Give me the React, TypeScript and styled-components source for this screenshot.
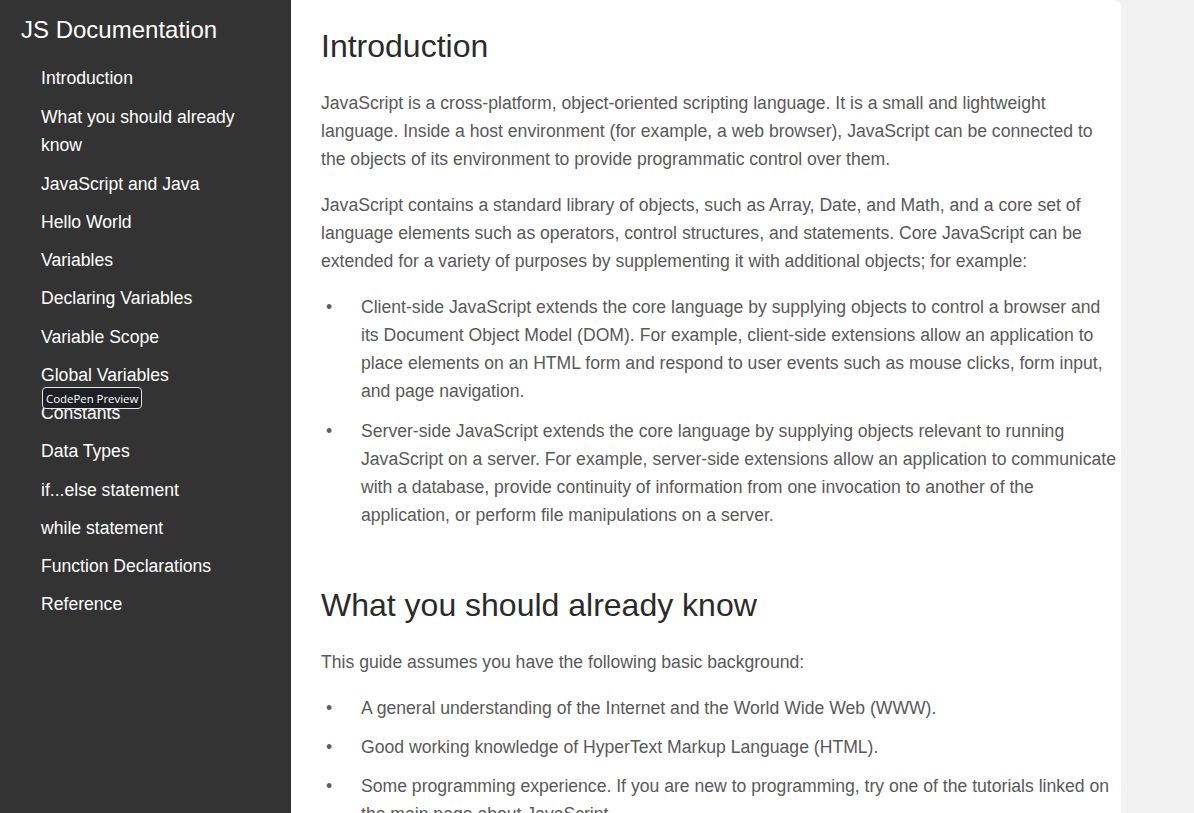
import React from "react";
import styled, { createGlobalStyle } from "styled-components";

const Global = createGlobalStyle`
  html, body { margin: 0; padding: 0; height: 100%; overflow: hidden; }
  body { background: #f2f2f2; font-family: "Liberation Sans", Arial, sans-serif; }
  #root { height: 100%; }
`;

const Page = styled.div`
  display: flex;
  height: 100vh;
  position: relative;
`;

const Sidebar = styled.nav`
  width: 291px;
  flex: none;
  background: #333333;
  color: #ffffff;
  padding: 16px 20px 0 21px;
  box-sizing: border-box;
`;

const SideTitle = styled.header`
  font-size: 24px;
  line-height: 28px;
  margin: 0 0 20px;
`;

const NavList = styled.ul`
  list-style: none;
  margin: 0;
  padding: 0 0 0 20px;
  display: flex;
  flex-direction: column;
  gap: 10.25px;
`;

const NavItem = styled.li<{ $first?: boolean }>`
  margin-bottom: ${(p) => (p.$first ? 1 : 0)}px;
`;

const NavLink = styled.a`
  display: block;
  color: #ffffff;
  text-decoration: none;
  font-size: 17.6px;
  line-height: 28px;
`;

const Main = styled.main`
  width: 830px;
  flex: none;
  background: #ffffff;
  border-radius: 0 8px 0 0;
  padding: 27px 0 0 30px;
  box-sizing: border-box;
  display: flex;
  flex-direction: column;
  gap: 39px;
`;

const Section = styled.section`
  display: flex;
  flex-direction: column;
`;

const Heading = styled.header`
  font-size: 32px;
  line-height: 38px;
  color: #2b2b2b;
  margin: 0 0 24px;
`;

const Para = styled.p`
  font-size: 17.6px;
  line-height: 28px;
  color: #595959;
  margin: 0 0 18px;
`;

const List = styled.ul<{ $gap?: number }>`
  list-style: none;
  margin: 0 0 18px;
  padding: 0;
  display: flex;
  flex-direction: column;
  gap: ${(p) => p.$gap ?? 12}px;
`;

const Item = styled.li`
  display: grid;
  grid-template-columns: 40px 1fr;
  font-size: 17.6px;
  line-height: 28px;
  color: #595959;
  &::before {
    content: "•";
    padding-left: 5px;
    color: #5f5f5f;
  }
`;

const Badge = styled.div`
  position: absolute;
  left: 42px;
  top: 387px;
  height: 22px;
  box-sizing: border-box;
  padding: 0 3px;
  display: flex;
  align-items: center;
  background: #1f1f26;
  color: #ffffff;
  border: 1px solid #e6e6e6;
  border-radius: 4px;
  font-family: "Open Sans", "Noto Sans", sans-serif;
  font-size: 11.4px;
`;

const nav = [
  "Introduction",
  "What you should already know",
  "JavaScript and Java",
  "Hello World",
  "Variables",
  "Declaring Variables",
  "Variable Scope",
  "Global Variables",
  "Constants",
  "Data Types",
  "if...else statement",
  "while statement",
  "Function Declarations",
  "Reference",
];

export default function App() {
  return (
    <Page>
      <Global />
      <Sidebar>
        <SideTitle>JS Documentation</SideTitle>
        <NavList>
          {nav.map((n, i) => (
            <NavItem key={n} $first={i === 0}>
              <NavLink href="#">{n}</NavLink>
            </NavItem>
          ))}
        </NavList>
      </Sidebar>
      <Main>
        <Section>
          <Heading>Introduction</Heading>
          <Para>
            JavaScript is a cross-platform, object-oriented scripting language. It is a small and
            lightweight language. Inside a host environment (for example, a web browser), JavaScript
            can be connected to the objects of its environment to provide programmatic control over
            them.
          </Para>
          <Para>
            JavaScript contains a standard library of objects, such as Array, Date, and Math, and a
            core set of language elements such as operators, control structures, and statements. Core
            JavaScript can be extended for a variety of purposes by supplementing it with additional
            objects; for example:
          </Para>
          <List>
            <Item>
              <span>
                Client-side JavaScript extends the core language by supplying objects to control a
                browser and its Document Object Model (DOM). For example, client-side extensions allow
                an application to place elements on an HTML form and respond to user events such as
                mouse clicks, form input, and page navigation.
              </span>
            </Item>
            <Item>
              <span>
                Server-side JavaScript extends the core language by supplying objects relevant to
                running JavaScript on a server. For example, server-side extensions allow an
                application to communicate with a database, provide continuity of information from one
                invocation to another of the application, or perform file manipulations on a server.
              </span>
            </Item>
          </List>
        </Section>
        <Section>
          <Heading>What you should already know</Heading>
          <Para>This guide assumes you have the following basic background:</Para>
          <List $gap={11}>
            <Item>
              <span>A general understanding of the Internet and the World Wide Web (WWW).</span>
            </Item>
            <Item>
              <span>Good working knowledge of HyperText Markup Language (HTML).</span>
            </Item>
            <Item>
              <span>
                Some programming experience. If you are new to programming, try one of the tutorials
                linked on the main page about JavaScript.
              </span>
            </Item>
          </List>
        </Section>
      </Main>
      <Badge>CodePen Preview</Badge>
    </Page>
  );
}
